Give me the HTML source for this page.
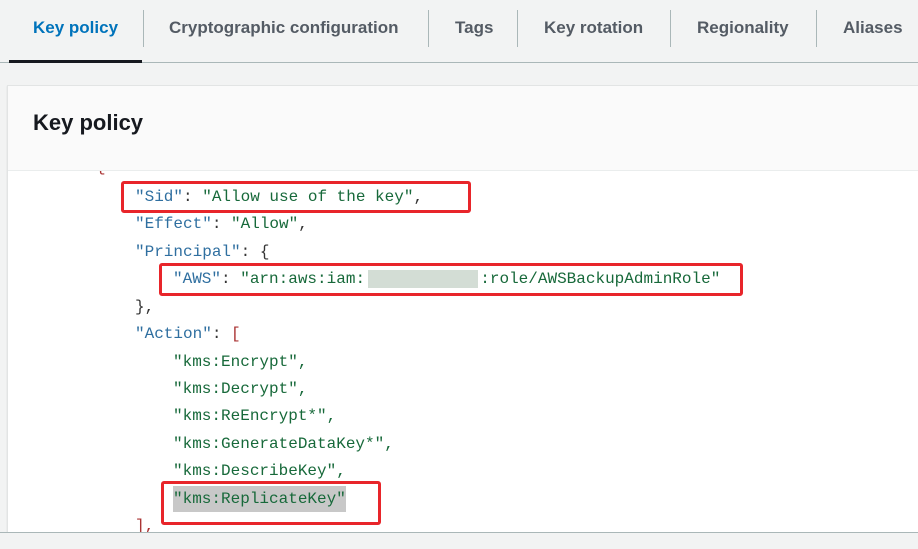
<!DOCTYPE html>
<html><head><style>
body{margin:0;width:918px;height:548px;background:#f2f3f3;position:relative;overflow:hidden;font-family:"Liberation Sans",sans-serif}
.t{position:absolute;top:18px;font-weight:bold;font-size:17px;color:#545b64;white-space:nowrap}
.sep{position:absolute;top:10px;width:1px;height:37px;background:#aab7b8}
.card{position:absolute;left:7px;top:85px;width:920px;height:447px;background:#fff;border:1px solid #e2e4e4;box-shadow:0 1px 1px rgba(0,0,0,.15)}
.hd{height:84px;background:#fafafa;border-bottom:1px solid #eaeded}
.c{position:absolute;font-family:"Liberation Mono",monospace;font-size:16px;white-space:pre;color:#333;line-height:20px}
.k{color:#2f6fa0}.s{color:#17693a}.p{color:#333}
.box{position:absolute;border:3px solid #e8252a;border-radius:3px;box-sizing:border-box}
</style></head><body>
<div class="t" style="left:33px;color:#0073bb">Key policy</div>
<div class="sep" style="left:143px"></div>
<div class="t" style="left:169px">Cryptographic configuration</div>
<div class="sep" style="left:428px"></div>
<div class="t" style="left:455px">Tags</div>
<div class="sep" style="left:517px"></div>
<div class="t" style="left:544px">Key rotation</div>
<div class="sep" style="left:670px"></div>
<div class="t" style="left:697px">Regionality</div>
<div class="sep" style="left:816px"></div>
<div class="t" style="left:843px">Aliases</div>
<div style="position:absolute;left:0;top:62px;width:918px;height:1px;background:#aab7b8"></div>
<div style="position:absolute;left:9px;top:60px;width:133px;height:3px;background:#16191f"></div>
<div class="card"><div class="hd"><div style="position:absolute;left:25px;top:24px;font-size:22px;font-weight:bold;color:#16191f">Key policy</div></div></div>
<div style="position:absolute;left:8px;top:171px;width:910px;height:361px;overflow:hidden">
<div class="c" style="left:88px;top:-14px;color:#a33">{</div>
</div>
<div class="c" style="left:135px;top:187px"><span class="k">"Sid"</span>: <span class="s">"Allow use of the key"</span>,</div>
<div class="c" style="left:135px;top:214px"><span class="k">"Effect"</span>: <span class="s">"Allow"</span>,</div>
<div class="c" style="left:135px;top:242px"><span class="k">"Principal"</span>: {</div>
<div class="c" style="left:173px;top:269px"><span class="k">"AWS"</span>: <span class="s">"arn:aws:iam:            :role/AWSBackupAdminRole"</span></div>
<div style="position:absolute;left:368px;top:270px;width:110px;height:18px;background:#d3ddd5"></div>
<div class="c" style="left:135px;top:297px">},</div>
<div class="c" style="left:135px;top:324px"><span class="k">"Action"</span>: <span style="color:#a33">[</span></div>
<div class="c s" style="left:173px;top:352px">"kms:Encrypt",</div>
<div class="c s" style="left:173px;top:379px">"kms:Decrypt",</div>
<div class="c s" style="left:173px;top:406px">"kms:ReEncrypt*",</div>
<div class="c s" style="left:173px;top:434px">"kms:GenerateDataKey*",</div>
<div class="c s" style="left:173px;top:461px">"kms:DescribeKey",</div>
<div style="position:absolute;left:173px;top:486px;width:173px;height:26px;background:#c8c8c8"></div>
<div class="c s" style="left:173px;top:489px">"kms:ReplicateKey"</div>
<div class="c" style="left:135px;top:516px;color:#a33">],</div>
<div style="position:absolute;left:0;top:532px;width:918px;height:16px;background:#f2f3f3;border-top:1px solid #aab7b8"></div>
<div class="box" style="left:121px;top:181px;width:350px;height:32px"></div>
<div class="box" style="left:159px;top:263px;width:584px;height:33px"></div>
<div class="box" style="left:161px;top:481px;width:220px;height:44px"></div>
</body></html>
